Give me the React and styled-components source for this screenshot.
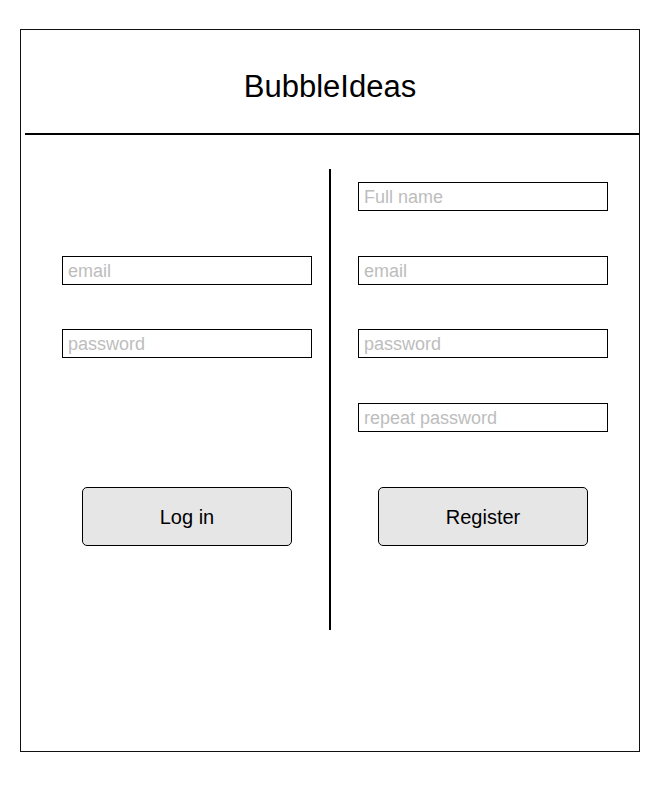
import React from 'react';
import styled, { createGlobalStyle } from 'styled-components';

export default function App() {
  return (
    <Page>
      <GlobalStyle />
      <Frame>
        <Header>
          <Title>BubbleIdeas</Title>
        </Header>
        <HeaderRule />
        <Body>
          <Column $padLeft={41}>
            <Field $row={2} placeholder="email" />
            <Field $row={3} type="password" placeholder="password" />
            <Button>Log in</Button>
          </Column>
          <Divider />
          <Column $padLeft={27}>
            <Field $row={1} placeholder="Full name" />
            <Field $row={2} placeholder="email" />
            <Field $row={3} type="password" placeholder="password" />
            <Field $row={4} type="password" placeholder="repeat password" />
            <Button>Register</Button>
          </Column>
        </Body>
      </Frame>
    </Page>
  );
}

const GlobalStyle = createGlobalStyle`
  html, body {
    margin: 0;
    padding: 0;
    background: #fff;
    font-family: 'Liberation Sans', Arial, sans-serif;
  }
  * {
    box-sizing: border-box;
  }
`;
const Page = styled.div`
  padding: 29px 0 0 20px;
`;
const Frame = styled.div`
  width: 620px;
  height: 723px;
  border: 1px solid #111;
  display: flex;
  flex-direction: column;
`;
const Header = styled.header`
  height: 103px;
  display: flex;
  align-items: center;
  justify-content: center;
  padding-top: 10px;
`;
const Title = styled.h1`
  margin: 0;
  font-size: 31px;
  font-weight: normal;
  color: #000;
`;
const HeaderRule = styled.div`
  height: 2px;
  margin-left: 4px;
  background: #000;
`;
const Body = styled.main`
  display: grid;
  grid-template-columns: 308px 2px 308px;
  align-items: start;
`;
const Divider = styled.div`
  margin-top: 34px;
  height: 461px;
  background: #000;
`;
const Column = styled.section`
  display: grid;
  grid-template-columns: 250px;
  grid-template-rows: 29px 29px 29px 29px 59px;
  row-gap: 44.5px;
  padding: 47px 0 0 ${p => p.$padLeft}px;
`;
const Field = styled.input`
  grid-row: ${p => p.$row};
  width: 250px;
  height: 29px;
  margin: 0;
  padding: 2px 5px 0;
  border: 1px solid #000;
  border-radius: 0;
  background: #fff;
  font-family: 'Liberation Sans', Arial, sans-serif;
  font-size: 18px;
  color: #333;
  outline: none;
  &::placeholder {
    color: #bdbdbd;
  }
`;
const Button = styled.button`
  grid-row: 5;
  justify-self: center;
  width: 210px;
  height: 59px;
  margin-top: 10.5px;
  padding: 2px 0 0;
  border: 1px solid #000;
  border-radius: 5px;
  background: #e6e6e6;
  font-family: 'Liberation Sans', Arial, sans-serif;
  font-size: 20px;
  color: #000;
  cursor: pointer;
`;
